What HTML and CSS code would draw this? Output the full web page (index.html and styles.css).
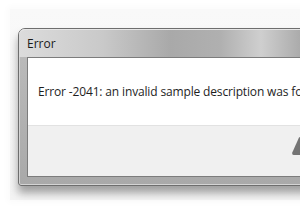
FILE: index.html
```html
<!DOCTYPE html>
<html lang="en">
  <head>
    <meta charset="UTF-8" />
    <title>Error</title>
    <link rel="stylesheet" href="styles.css">
  </head>
  <body>
    <div class="stage">
      <div class="window">
        <div class="titlebar">Error</div>
        <div class="client">
          <div class="message">Error -2041: an invalid sample description was found in the movie.</div>
          <div class="footer"></div>
        </div>
      </div>
    </div>
    <svg class="corner-mark" width="9" height="20" viewBox="0 0 9 20">
      <path d="M8 0.5 L9 0 L9 18 L2.5 18 Q0.5 17.6 1.3 15.5 Z" fill="#747474" />
    </svg>
  </body>
</html>
```

FILE: styles.css
```css
body {
  margin: 0;
  background: #ffffff;
  font-family: "Open Sans", "Noto Sans", sans-serif;
  overflow: hidden;
  width: 300px;
  height: 210px;
  position: relative;
}
.stage {
  margin: 9px 0 0 10px;
  padding: 19px 0 14px 8px;
  width: 330px;
  background: linear-gradient(180deg, #f9f9f9 0%, #f4f4f4 100%);
  box-shadow: 0 0 6px 3px #fbfbfb;
}
.window {
  width: 320px;
  border: 1px solid #6e6e6e;
  border-radius: 7px 7px 3px 3px;
  background: linear-gradient(180deg, #bdbdbd 0%, #a9a9a9 100%);
  padding: 0 8px 8px 8px;
  box-shadow: inset 0 0 0 1px #d4d4d4, 0 7px 8px rgba(0, 0, 0, 0.35);
}
.titlebar {
  height: 28px;
  line-height: 30px;
  font-size: 12px;
  color: #1a1a1a;
  margin: 0 -8px;
  padding: 0 8px;
  border-radius: 6px 6px 0 0;
  background: linear-gradient(90deg, #dcdcdc 0%, #c9c9c9 25%, #a9a9a9 45%, #b0b0b0 60%, #cfcfcf 72%, #a7a7a7 85%, #a5a5a5 100%);
  box-shadow: inset 0 1px 0 #e6e6e6;
}
.client {
  border: 1px solid #7c7c7c;
  background: #ffffff;
}
.message {
  height: 67px;
  padding: 24px 0 0 10px;
  box-sizing: border-box;
  font-size: 12px;
  letter-spacing: -0.15px;
  line-height: 20px;
  color: #1e1e1e;
  white-space: nowrap;
}
.footer {
  height: 50px;
  background: #f0f0f0;
  border-top: 1px solid #e2e2e2;
}
.corner-mark {
  position: absolute;
  left: 291px;
  top: 137px;
}
```
